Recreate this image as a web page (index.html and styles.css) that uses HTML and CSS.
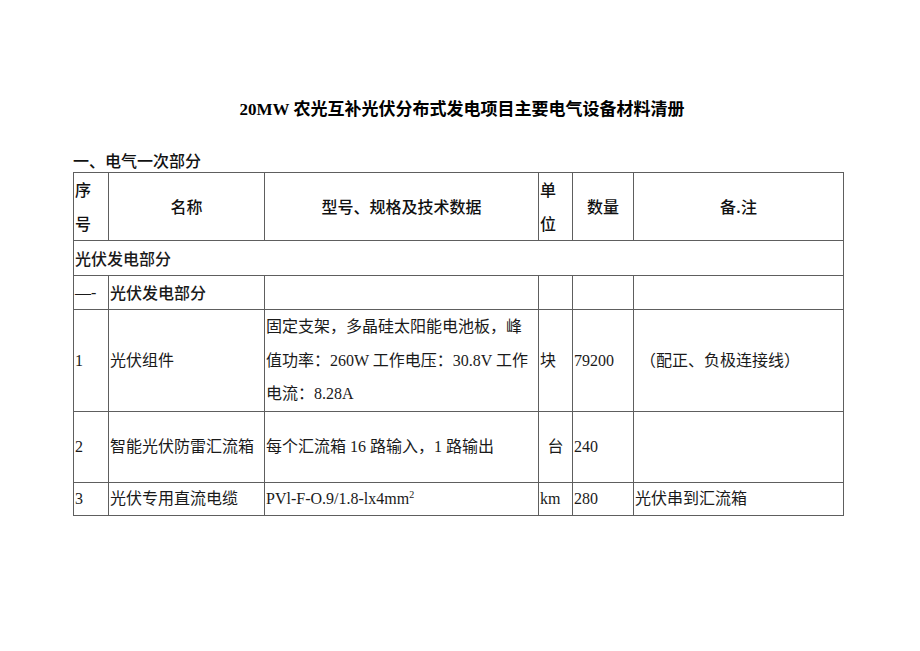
FILE: index.html
```html
<!DOCTYPE html>
<html lang="zh-CN">
<head>
<meta charset="utf-8">
<title>20MW 农光互补光伏分布式发电项目主要电气设备材料清册</title>
<link rel="stylesheet" href="styles.css">
</head>
<body>
<main class="page">
  <h1 class="title"><span class="latin">20MW</span> 农光互补光伏分布式发电项目主要电气设备材料清册</h1>
  <h2 class="section">一、电气一次部分</h2>
  <table class="grid">
    <colgroup>
      <col class="c-no">
      <col class="c-name">
      <col class="c-spec">
      <col class="c-unit">
      <col class="c-qty">
      <col class="c-note">
    </colgroup>
    <thead>
      <tr class="head">
        <th class="left">序<br>号</th>
        <th>名称</th>
        <th>型号、规格及技术数据</th>
        <th class="left">单<br>位</th>
        <th>数量</th>
        <th>备.注</th>
      </tr>
    </thead>
    <tbody>
      <tr class="group">
        <td colspan="6">光伏发电部分</td>
      </tr>
      <tr class="sub">
        <td>—-</td>
        <td>光伏发电部分</td>
        <td></td>
        <td></td>
        <td></td>
        <td></td>
      </tr>
      <tr class="multi">
        <td>1</td>
        <td>光伏组件</td>
        <td>固定支架，多晶硅太阳能电池板，峰<br>值功率：260W 工作电压：30.8V 工作<br>电流：8.28A</td>
        <td>块</td>
        <td>79200</td>
        <td class="note-pad">（配正、负极连接线）</td>
      </tr>
      <tr class="tall">
        <td>2</td>
        <td>智能光伏防雷汇流箱</td>
        <td>每个汇流箱 16 路输入，1 路输出</td>
        <td class="center">台</td>
        <td>240</td>
        <td></td>
      </tr>
      <tr class="short">
        <td>3</td>
        <td>光伏专用直流电缆</td>
        <td>PVl-F-O.9/1.8-lx4mm<sup>2</sup></td>
        <td>km</td>
        <td>280</td>
        <td>光伏串到汇流箱</td>
      </tr>
    </tbody>
  </table>
</main>
</body>
</html>
```

FILE: styles.css
```css
html, body {
  margin: 0;
  padding: 0;
  background: #ffffff;
}

body {
  color: #1a1a1a;
  font-family: "Liberation Serif", "Noto Sans CJK SC", serif;
  font-size: 16px;
}

.page {
  width: 770px;
  padding: 98px 0 0 73px;
}

.title {
  margin: 0;
  font-size: 17px;
  line-height: 24px;
  font-weight: bold;
  color: #000;
  text-align: center;
  padding-left: 8px;
}

.section {
  margin: 26px 0 0 0;
  font-family: "Noto Sans CJK SC", sans-serif;
  font-size: 16px;
  line-height: 24px;
  font-weight: 500;
  color: #111;
}

.grid {
  width: 770px;
  border-collapse: collapse;
  table-layout: fixed;
}

.c-no { width: 35px; }
.c-name { width: 156px; }
.c-spec { width: 274px; }
.c-unit { width: 34px; }
.c-qty { width: 61px; }
.c-note { width: 210px; }

.grid th,
.grid td {
  border: 1px solid #5e5e5e;
  padding: 0 1px;
  line-height: 34px;
  font-size: 16px;
  vertical-align: middle;
  text-align: left;
}

.grid th {
  font-family: "Noto Sans CJK SC", sans-serif;
  font-weight: 500;
  text-align: center;
  color: #111;
  line-height: 33.5px;
}

.grid th.left {
  text-align: left;
}

.group td,
.sub td {
  font-family: "Noto Sans CJK SC", sans-serif;
  font-weight: 500;
}

.sub td {
  line-height: 33px;
}

.sub td:first-child {
  font-family: "Liberation Serif", serif;
  font-weight: normal;
}

.multi td {
  line-height: 33.67px;
}

.tall td {
  height: 70px;
  line-height: 34px;
}

.short td {
  line-height: 32px;
}

.center {
  text-align: center !important;
}

.note-pad {
  padding-left: 6px !important;
}

sup {
  font-size: 10px;
  line-height: 0;
  vertical-align: 6px;
}
```
